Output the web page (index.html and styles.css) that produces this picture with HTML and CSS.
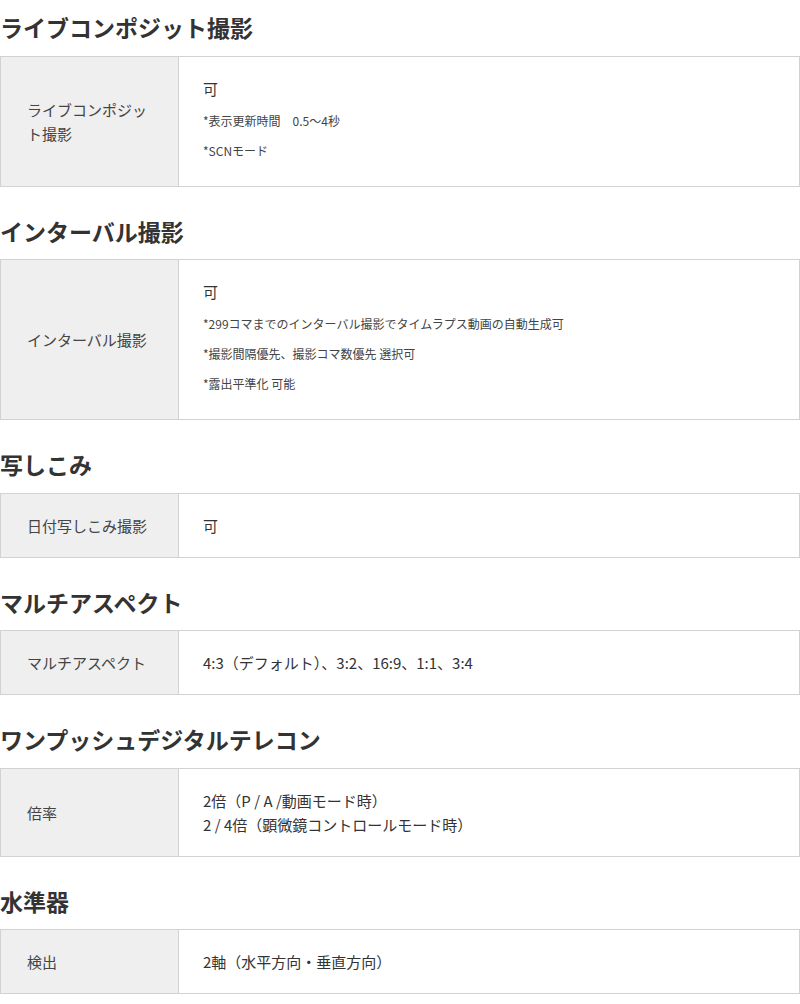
FILE: index.html
```html
<!DOCTYPE html>
<html lang="ja">
<head>
    <meta charset="UTF-8" />
    <meta name="viewport" content="width=device-width, initial-scale=1" />
    <title>仕様 - 撮影機能</title>
    <link rel="stylesheet" href="styles.css">
</head>
<body>

    <section class="spec">
        <h2>ライブコンポジット撮影</h2>
        <table class="spec-table">
            <tr>
                <th>ライブコンポジット撮影</th>
                <td>
                    <p>可</p>
                    <ul class="notes">
                        <li>*表示更新時間　0.5〜4秒</li>
                        <li>*SCNモード</li>
                    </ul>
                </td>
            </tr>
        </table>
    </section>

    <section class="spec">
        <h2>インターバル撮影</h2>
        <table class="spec-table">
            <tr>
                <th>インターバル撮影</th>
                <td>
                    <p>可</p>
                    <ul class="notes">
                        <li>*299コマまでのインターバル撮影でタイムラプス動画の自動生成可</li>
                        <li>*撮影間隔優先、撮影コマ数優先 選択可</li>
                        <li>*露出平準化 可能</li>
                    </ul>
                </td>
            </tr>
        </table>
    </section>

    <section class="spec">
        <h2>写しこみ</h2>
        <table class="spec-table">
            <tr>
                <th>日付写しこみ撮影</th>
                <td>可</td>
            </tr>
        </table>
    </section>

    <section class="spec">
        <h2>マルチアスペクト</h2>
        <table class="spec-table">
            <tr>
                <th>マルチアスペクト</th>
                <td>4:3（デフォルト）、3:2、16:9、1:1、3:4</td>
            </tr>
        </table>
    </section>

    <section class="spec">
        <h2>ワンプッシュデジタルテレコン</h2>
        <table class="spec-table">
            <tr>
                <th>倍率</th>
                <td>2倍（P / A /動画モード時）<br>2 / 4倍（顕微鏡コントロールモード時）</td>
            </tr>
        </table>
    </section>

    <section class="spec">
        <h2>水準器</h2>
        <table class="spec-table">
            <tr>
                <th>検出</th>
                <td>2軸（水平方向・垂直方向）</td>
            </tr>
        </table>
    </section>

</body>
</html>
```

FILE: styles.css
```css
* {
    box-sizing: border-box;
    margin: 0;
    padding: 0;
}

body {
    font-family: "Noto Sans CJK JP", "Noto Sans", sans-serif;
    background-color: #fff;
    color: #333;
    padding-top: 10px;
}

.spec {
    margin-top: 27px;
}

    .spec:first-child {
        margin-top: 0;
    }

    .spec h2 {
        font-size: 23px;
        line-height: 1.5;
        font-weight: bold;
        color: #333;
        margin-bottom: 11px;
    }

.spec-table {
    width: 100%;
    border-collapse: collapse;
    font-size: 15px;
    line-height: 24px;
}

    .spec-table th,
    .spec-table td {
        border: 1px solid #d2d2d2;
        padding: 20px 24px 19px;
        vertical-align: middle;
        text-align: left;
    }

    .spec-table th {
        width: 178px;
        padding-left: 26px;
        padding-right: 26px;
        font-weight: normal;
        background-color: #efefef;
        color: #444;
    }

.notes {
    list-style: none;
    margin-bottom: 6px;
}

    .notes li {
        font-size: 12px;
        line-height: 20px;
        margin-top: 10px;
        color: #444;
    }
```
